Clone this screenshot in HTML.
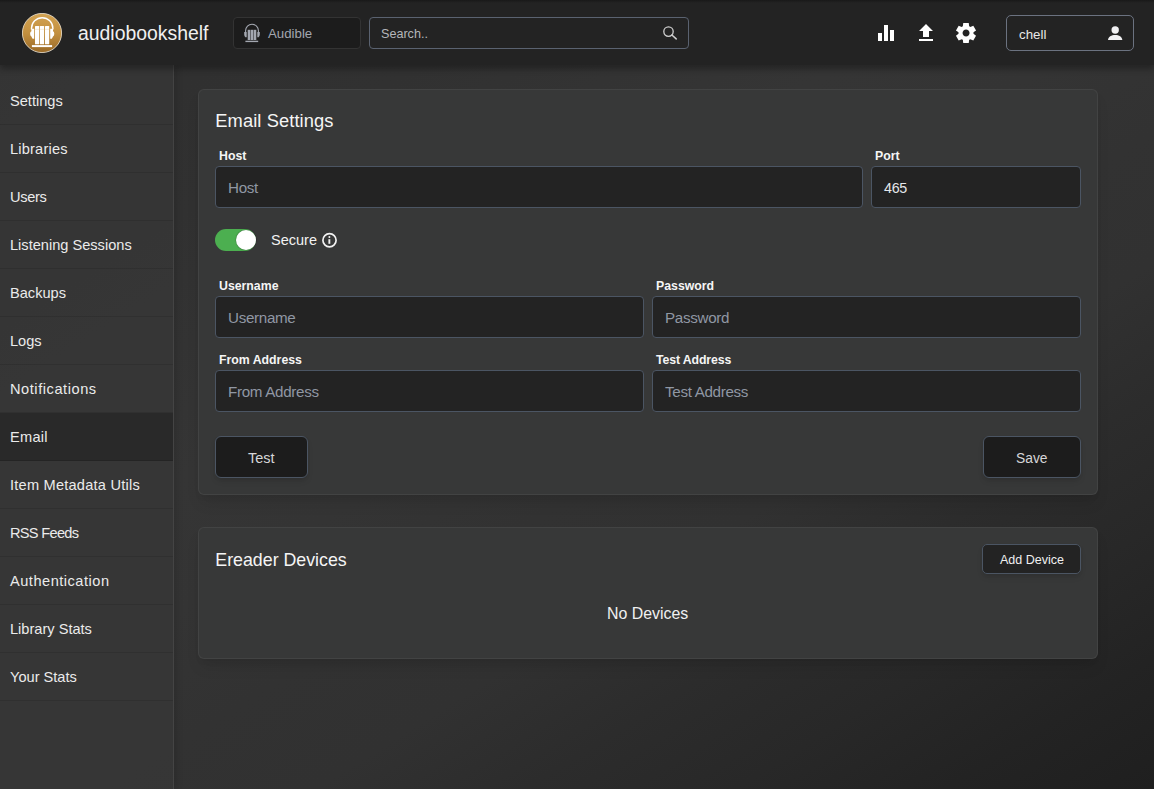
<!DOCTYPE html>
<html><head><meta charset="utf-8">
<style>
*{box-sizing:border-box;margin:0;padding:0}
html,body{width:1154px;height:789px;overflow:hidden;background:#2b2b2b;font-family:"Liberation Sans",sans-serif;color:#fff}
.abs{position:absolute}
.t{position:absolute;white-space:nowrap;line-height:1}
#appbar{position:absolute;left:0;top:0;width:1154px;height:65px;background:#232323;z-index:5;box-shadow:0 4px 6px rgba(17,17,17,.45)}
#page{position:absolute;left:0;top:65px;width:1154px;height:724px;background:linear-gradient(to right bottom,#2e2e2e,#303030,#313131,#333333,#353535,#343434,#323232,#313131,#2c2c2c,#282828,#232323,#1f1f1f)}
#side{position:absolute;left:0;top:65px;width:174px;height:724px;background:rgba(55,56,56,.7);border-right:1px solid rgba(255,255,255,.07);z-index:2;box-shadow:3px 0 6px rgba(0,0,0,.12)}
.nav{position:absolute;left:0;width:173px;height:48px;border-bottom:1px solid rgba(0,0,0,.1)}
.nav.sel{background:rgba(35,35,35,.7)}
.nav span{position:absolute;left:10px;top:17px;font-size:14.6px;line-height:1;color:#ebebeb}
.card{position:absolute;left:198px;width:900px;background:#373838;border:1px solid rgba(255,255,255,.06);border-radius:6px;box-shadow:0 10px 15px -3px rgba(0,0,0,.1),0 4px 6px -2px rgba(0,0,0,.05)}
.inp{position:absolute;background:#232323;border:1px solid #4b5563;border-radius:4px}
.lbl{position:absolute;font-weight:bold;font-size:12.3px;line-height:1;color:#f5f5f5;white-space:nowrap}
.ph{position:absolute;font-size:15.2px;letter-spacing:-0.32px;line-height:1;color:#9097a3;white-space:nowrap}
.btn{position:absolute;background:#1c1c1c;border:1px solid #4b5563;border-radius:6px;box-shadow:0 4px 6px -1px rgba(0,0,0,.1),0 2px 4px -1px rgba(0,0,0,.06)}
</style></head><body>
<div id="page"></div>
<div id="appbar"><div class="abs" style="left:0;top:0;width:1154px;height:3px;background:linear-gradient(#191919,#232323)"></div>
  <!-- logo -->
  <svg class="abs" style="left:22px;top:13px" width="40" height="40" viewBox="0 0 40 40">
    <defs><linearGradient id="lg" x1="0" y1="0" x2="0" y2="1"><stop offset="0" stop-color="#d3a352"/><stop offset=".5" stop-color="#c3903f"/><stop offset="1" stop-color="#996927"/></linearGradient></defs>
    <circle cx="20" cy="20" r="19.6" fill="url(#lg)" stroke="#f5ead6" stroke-width=".8"/>
    <path d="M9.5 16.5 V15.4 A10.7 10.7 0 0 1 30.9 15.4 V16.5" fill="none" stroke="#fff" stroke-width="1.4"/>
    <path d="M9.4 15.8 h2.8 v10 h-1.6 q-.6 -1.2 -1.2 -2.4 q-1.3 -.3 -1.3 -2.6 q0 -2.3 1.3 -2.6z" fill="#fff"/>
    <path d="M31 15.8 h-2.8 v10 h1.6 q.6 -1.2 1.2 -2.4 q1.3 -.3 1.3 -2.6 q0 -2.3 -1.3 -2.6z" fill="#fff"/>
    <rect x="13" y="13" width="4.2" height="18.2" rx=".5" fill="#fff"/>
    <rect x="17.9" y="13" width="4.2" height="18.2" rx=".5" fill="#fff"/>
    <rect x="23" y="13" width="4.2" height="18.2" rx=".5" fill="#fff"/>
    <path d="M13 16.3h4.2M17.9 16.3h4.2M23 16.3h4.2" stroke="#e8d2ad" stroke-width=".5"/>
    <rect x="9.9" y="32.1" width="20.2" height="2" fill="#fff"/>
  </svg>
  <div class="t" style="left:78px;top:24.3px;font-size:19.4px;color:#f0f0f0">audiobookshelf</div>
  <!-- library btn -->
  <div class="abs" style="left:233px;top:17px;width:128px;height:32px;background:#1c1c1c;border:1px solid #333;border-radius:4px"></div>
  <svg class="abs" style="left:243px;top:22px" width="18" height="21" viewBox="0 0 18 21">
    <path d="M2.6 10 V8.6 A6.4 6.4 0 0 1 15.4 8.6 V10" fill="none" stroke="#a3a7b0" stroke-width="1.1"/>
    <path d="M1.2 10 h2.5 v5.2 h-1.3 q-1.2 -.8 -1.2 -2.6z M16.8 10 h-2.5 v5.2 h1.3 q1.2 -.8 1.2 -2.6z" fill="#a3a7b0"/>
    <rect x="4.7" y="7.8" width="2.6" height="10.2" fill="#a3a7b0"/>
    <rect x="7.7" y="7.8" width="2.6" height="10.2" fill="#a3a7b0"/>
    <rect x="10.7" y="7.8" width="2.6" height="10.2" fill="#a3a7b0"/>
    <rect x="2.4" y="18.7" width="12.8" height="1.4" fill="#a3a7b0"/>
  </svg>
  <div class="t" style="left:268px;top:26.7px;font-size:13.25px;color:#a3a7b0">Audible</div>
  <!-- search -->
  <div class="abs" style="left:369px;top:17px;width:320px;height:32px;background:#232323;border:1px solid #5a6270;border-radius:4px"></div>
  <div class="t" style="left:381px;top:28.4px;font-size:12.6px;color:#b4b6ba">Search..</div>
  <svg class="abs" style="left:662px;top:25px" width="16" height="16" viewBox="0 0 16 16">
    <circle cx="6.5" cy="6.6" r="4.7" fill="none" stroke="#cfcfcf" stroke-width="1.3"/>
    <path d="M9.9 10 L14.2 13.9" stroke="#cfcfcf" stroke-width="1.5" stroke-linecap="round"/>
  </svg>
  <!-- icons -->
  <svg class="abs" style="left:874px;top:21px" width="24" height="24" viewBox="0 0 24 24"><path fill="#fff" d="M4 20h4v-8H4v8zm6 0h4V4h-4v16zm6 0h4V9h-4v11z"/></svg>
  <svg class="abs" style="left:914px;top:21px" width="24" height="24" viewBox="0 0 24 24"><path fill="#fff" d="M5 20h14v-2H5v2zm0-10h4v6h6v-6h4l-7-7-7 7z"/></svg>
  <svg class="abs" style="left:954px;top:21px" width="24" height="24" viewBox="0 -960 960 960"><path fill="#fff" d="m370-80-16-128q-13-5-24.5-12T307-235l-119 50L78-375l103-78q-1-7-1-13.5v-27q0-6.5 1-13.5L78-585l110-190 119 50q11-8 23-15t24-12l16-128h220l16 128q13 5 24.5 12t22.5 15l119-50 110 190-103 78q1 7 1 13.5v27q0 6.5-2 13.5l103 78-110 190-118-50q-11 8-23 15t-24 12L590-80H370Zm112-260q58 0 99-41t41-99q0-58-41-99t-99-41q-59 0-99.5 41T342-480q0 58 40.5 99t99.5 41Z"/></svg>
  <!-- user -->
  <div class="abs" style="left:1006px;top:15px;width:128px;height:36px;background:#232323;border:1px solid #6b7280;border-radius:5px"></div>
  <div class="t" style="left:1019px;top:28px;font-size:13.3px;color:#e8e8e8">chell</div>
  <svg class="abs" style="left:1106px;top:24px" width="18" height="18" viewBox="0 0 18 18">
    <circle cx="9.2" cy="6" r="3.7" fill="#f0f0f2"/>
    <path d="M2 16.1 C2 12.6 5.5 10.9 9.2 10.9 C12.9 10.9 16.3 12.6 16.3 16.1 Z" fill="#f0f0f2"/>
  </svg>
</div>

<div id="side">
  <div class="nav" style="top:12px"><span>Settings</span></div>
  <div class="nav" style="top:60px"><span style="letter-spacing:0.19px">Libraries</span></div>
  <div class="nav" style="top:108px"><span style="letter-spacing:-0.35px">Users</span></div>
  <div class="nav" style="top:156px"><span>Listening Sessions</span></div>
  <div class="nav" style="top:204px"><span>Backups</span></div>
  <div class="nav" style="top:252px"><span>Logs</span></div>
  <div class="nav" style="top:300px"><span style="letter-spacing:0.55px">Notifications</span></div>
  <div class="nav sel" style="top:348px"><span style="letter-spacing:0.25px">Email</span></div>
  <div class="nav" style="top:396px"><span style="letter-spacing:0.22px">Item Metadata Utils</span></div>
  <div class="nav" style="top:444px"><span style="letter-spacing:-0.7px">RSS Feeds</span></div>
  <div class="nav" style="top:492px"><span style="letter-spacing:0.5px">Authentication</span></div>
  <div class="nav" style="top:540px"><span>Library Stats</span></div>
  <div class="nav" style="top:588px"><span>Your Stats</span></div>
</div>

<!-- Email settings card -->
<div class="card" style="top:89px;height:406px"></div>
<div class="t" style="left:215.3px;top:112px;font-size:18.3px;letter-spacing:0.1px;color:#f5f5f5">Email Settings</div>

<div class="lbl" style="left:219px;top:150px">Host</div>
<div class="inp" style="left:215px;top:166px;width:648px;height:42px"></div>
<div class="ph" style="left:228px;top:180px">Host</div>

<div class="lbl" style="left:875px;top:150px">Port</div>
<div class="inp" style="left:871px;top:166px;width:210px;height:42px"></div>
<div class="ph" style="left:884px;top:181px;color:#e5e7eb;font-size:14.3px">465</div>

<!-- toggle -->
<div class="abs" style="left:215px;top:229px;width:41px;height:21.5px;border-radius:11px;background:#4caf50"></div>
<div class="abs" style="left:236px;top:229.8px;width:20px;height:20px;border-radius:50%;background:#fff;box-shadow:0 0 1px 0.5px rgba(0,0,0,.25)"></div>
<div class="t" style="left:271px;top:233px;font-size:14.5px;color:#f2f2f2">Secure</div>
<svg class="abs" style="left:321px;top:232px" width="17" height="17" viewBox="0 0 17 17">
  <circle cx="8.5" cy="8.3" r="6.6" fill="none" stroke="#f2f2f2" stroke-width="1.7"/>
  <path d="M7.4 7.2h1.9v4.6h-1.9z" fill="#f2f2f2"/>
  <circle cx="8.35" cy="5" r="1" fill="#f2f2f2"/>
</svg>

<div class="lbl" style="left:219px;top:280px">Username</div>
<div class="inp" style="left:215px;top:296px;width:429px;height:42px"></div>
<div class="ph" style="left:228px;top:310px">Username</div>
<div class="lbl" style="left:656px;top:280px">Password</div>
<div class="inp" style="left:652px;top:296px;width:429px;height:42px"></div>
<div class="ph" style="left:665px;top:310px">Password</div>

<div class="lbl" style="left:219px;top:354px">From Address</div>
<div class="inp" style="left:215px;top:370px;width:429px;height:42px"></div>
<div class="ph" style="left:228px;top:384px">From Address</div>
<div class="lbl" style="left:656px;top:354px;letter-spacing:-0.12px">Test Address</div>
<div class="inp" style="left:652px;top:370px;width:429px;height:42px"></div>
<div class="ph" style="left:665px;top:384px">Test Address</div>

<div class="btn" style="left:215px;top:436px;width:93px;height:42px"></div>
<div class="t" style="left:248px;top:450.5px;font-size:14.5px;color:#d6d6d8">Test</div>
<div class="btn" style="left:983px;top:436px;width:98px;height:42px"></div>
<div class="t" style="left:1016px;top:451.5px;font-size:13.8px;color:#d6d6d8">Save</div>

<!-- Ereader card -->
<div class="card" style="top:527px;height:132px"></div>
<div class="t" style="left:215.3px;top:552px;font-size:17.8px;color:#f5f5f5">Ereader Devices</div>
<div class="btn" style="left:982px;top:544px;width:99px;height:30px;background:#232323;border-radius:5px"></div>
<div class="t" style="left:1000px;top:553.5px;font-size:12.5px;color:#f0f0f0">Add Device</div>
<div class="t" style="left:607px;top:605.5px;font-size:15.9px;color:#f0f0f0">No Devices</div>
</body></html>
